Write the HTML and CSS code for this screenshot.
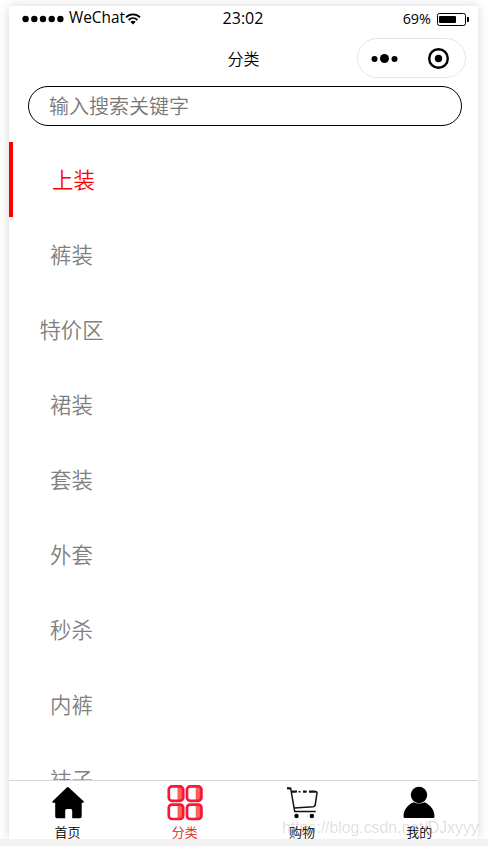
FILE: index.html
```html
<!DOCTYPE html>
<html lang="zh-CN">
  <head>
    <meta charset="UTF-8">
    <title>分类</title>
    <link rel="stylesheet" href="styles.css">
  </head>
  <body>
    <div class="phone">
      <!-- 状态栏 -->
      <div class="status">
        <div class="status-left">
          <svg class="signal" width="42" height="8" viewBox="0 0 42 8">
            <circle cx="3.6" cy="4" r="3.2"/>
            <circle cx="12.3" cy="4" r="3.2"/>
            <circle cx="21" cy="4" r="3.2"/>
            <circle cx="29.7" cy="4" r="3.2"/>
            <circle cx="38.4" cy="4" r="3.2"/>
          </svg>
          <span class="carrier">WeChat</span>
          <svg class="wifi" width="16" height="12" viewBox="0 0 16 12">
            <path d="M1 4.3C5 .3 11 .3 15 4.3M3.6 7C6.2 4.5 9.8 4.5 12.4 7" fill="none" stroke="#000" stroke-width="1.8"/>
            <path d="M5.3 8.8C7 7.4 9 7.4 10.7 8.8L8 11.6z"/>
          </svg>
        </div>
        <div class="time">23:02</div>
        <div class="status-right">
          <span class="percent">69%</span>
          <svg width="32" height="13" viewBox="0 0 32 13">
            <rect x=".5" y=".5" width="28" height="12" rx="2" fill="none" stroke="#000"/>
            <rect x="2" y="3" width="17" height="7" rx="1"/>
            <path d="M30 4h1q1 0 1 1v3q0 1-1 1h-1z"/>
          </svg>
        </div>
      </div>

      <!-- 导航栏 -->
      <div class="nav">
        <div class="nav-title">分类</div>
        <div class="capsule">
          <svg width="107" height="38" viewBox="0 0 107 38">
            <circle cx="16.5" cy="20" r="3"/>
            <circle cx="26.5" cy="19.5" r="4.5"/>
            <circle cx="36.5" cy="20" r="3"/>
            <circle cx="80.5" cy="19.5" r="9.3" fill="none" stroke="#000" stroke-width="2.4"/>
            <circle cx="80.5" cy="19.5" r="3.7"/>
          </svg>
        </div>
      </div>

      <input class="search" type="text" placeholder="输入搜索关键字">

      <!-- 分类列表 -->
      <div class="category">
        <div class="item active">上装</div>
        <div class="item">裤装</div>
        <div class="item">特价区</div>
        <div class="item">裙装</div>
        <div class="item">套装</div>
        <div class="item">外套</div>
        <div class="item">秒杀</div>
        <div class="item">内裤</div>
        <div class="item">袜子</div>
      </div>

      <!-- 底部标签 -->
      <div class="tabbar">
        <div class="tab">
          <svg width="36" height="36" viewBox="0 0 36 36">
            <path d="M16.800 2.500q1-1 2 0L33.600 16.200q1 1.400-.6 1.600H31.700V31.500q0 1.800-1.800 1.800H22.200V25.500q0-1.500-1.500-1.500h-4q-1.500 0-1.500 1.500v7.800H7q-1.800 0-1.800-1.800V17.800H3q-1.600-.4-.4-1.600z"/>
          </svg>
          <span>首页</span>
        </div>
        <div class="tab tab-active">
          <svg width="36" height="36" viewBox="0 0 36 36">
            <defs>
              <g id="cell">
                <rect x="1.800" y="1.400" width="14.400" height="14.400" rx="3.200" fill="#fff"/>
                <path d="M10.500 2h5v13h-5z" fill="#fb6558"/>
                <rect x="1.800" y="1.400" width="14.400" height="14.400" rx="3.200" fill="none" stroke="#f91537" stroke-width="2.700"/>
              </g>
            </defs>
            <use href="#cell"/>
            <use href="#cell" x="18.200"/>
            <use href="#cell" y="18.200"/>
            <use href="#cell" x="18.200" y="18.200"/>
          </svg>
          <span>分类</span>
        </div>
        <div class="tab">
          <svg width="36" height="36" viewBox="0 0 36 36">
            <g fill="none" stroke="#111" stroke-width="1.5">
              <path d="M3 3.400h3.700L10.700 26.600h21"/>
              <path d="M8 6.800H12M14.500 6.800h2M19 6.800h3.500M25 6.800h7.200q1 .2.800 1.200L31.200 20q-.3 1.500-2 1.700L10.200 23"/>
              <path d="M3 3.200h3.700M8 6.600H13M19 6.600h3.500M25 6.600h6.500" stroke-width="2"/>
            </g>
            <circle cx="12.500" cy="31" r="2.200"/>
            <circle cx="27.900" cy="31" r="2.200"/>
          </svg>
          <span>购物</span>
        </div>
        <div class="tab">
          <svg width="36" height="36" viewBox="0 0 36 36">
            <circle cx="18" cy="10" r="8.200"/>
            <path d="M12.500 17.300q5.500 2.500 11 0C29.500 20 33.500 25 33.500 31.500q0 1.500-1.500 1.500H4q-1.500 0-1.500-1.500C2.500 25 6.500 20 12.500 17.300z"/>
          </svg>
          <span>我的</span>
        </div>
      </div>
      <div class="watermark">https://blog.csdn.net/DJxyyy</div>
    </div>
  </body>
</html>
```

FILE: styles.css
```css
* { box-sizing: border-box; }
body {
  margin: 0;
  height: 846px;
  padding: 6px 10px 0 9px;
  overflow: hidden;
  border-bottom: 7px solid #f1f1f1;
  background: #fff;
  font-family: "Noto Sans CJK SC", sans-serif;
  font-weight: 350;
}
.phone {
  position: relative;
  display: flex;
  flex-direction: column;
  width: 469px;
  height: 833px;
  background: #fff;
  box-shadow: 0 0 10px rgba(0, 0, 0, 0.16);
}

.status {
  display: grid;
  grid-template-columns: 1fr auto 1fr;
  align-items: center;
  flex: none;
  height: 26px;
  padding: 0 9px 0 13px;
  font-family: "Open Sans", "Noto Sans", sans-serif;
  font-weight: 400;
}
.status-left, .status-right { display: flex; align-items: center; }
.status-right { justify-content: flex-end; gap: 6px; }
.carrier { margin: -3px 0 0 5px; font-size: 15.4px; }
.time { margin: -2px 5px 0 0; font-size: 16px; }
.percent { margin-top: -2px; font-size: 14.4px; }

.nav {
  display: grid;
  grid-template-columns: 1fr auto 1fr;
  align-items: center;
  flex: none;
  height: 54px;
  padding-right: 12px;
  padding-left: 12px;
}
.nav-title { grid-column: 2; margin-bottom: 2px; font-size: 16px; }
.capsule {
  justify-self: end;
  width: 109px;
  height: 40px;
  margin-bottom: 2px;
  border: 1px solid #e5e5e5;
  border-radius: 20px;
}
.capsule svg { display: block; }

.search {
  flex: none;
  width: 434px;
  height: 40px;
  margin: 0 19px 16px;
  padding: 0 20px 2px;
  border: 1px solid #000;
  border-radius: 20px;
  font: inherit;
  font-size: 20px;
}
.search::placeholder { color: #777; }

.category { flex: 1; min-height: 0; overflow: hidden; }
.item {
  width: 125px;
  height: 75px;
  color: #808080;
  font-size: 21.4px;
  line-height: 73px;
  text-align: center;
}
.active { border-left: 4px solid #f00; color: #f00; }

.tabbar {
  display: flex;
  flex: none;
  height: 59px;
  border-top: 1px solid #d4d4d4;
}
.tab {
  display: flex;
  flex: 1;
  flex-direction: column;
  align-items: center;
  padding-top: 4px;
  font-size: 13px;
  line-height: 22px;
}
.tab svg { flex: none; }
.tab-active { color: #e02010; }

.watermark {
  position: absolute;
  right: 0;
  bottom: 1px;
  width: 196px;
  color: rgba(0, 0, 0, 0.14);
  font: 15.8px/20px "Liberation Sans", Arial, sans-serif;
  white-space: nowrap;
}
```
